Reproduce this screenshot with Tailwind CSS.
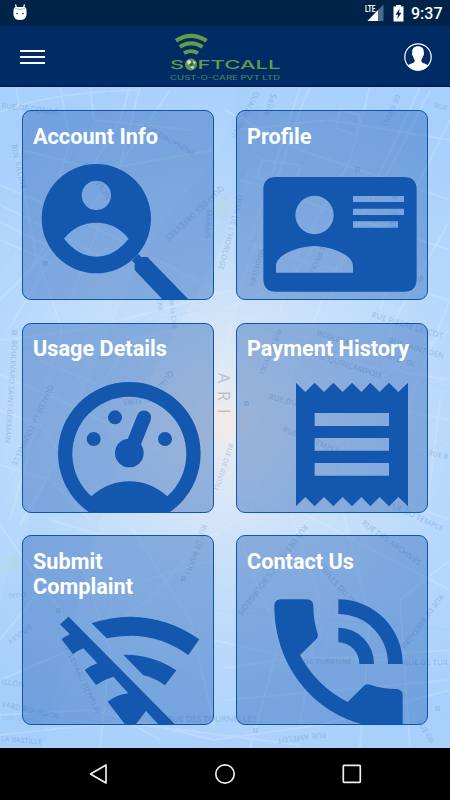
<!DOCTYPE html>
<html lang="en">
<head>
<meta charset="utf-8">
<meta name="viewport" content="width=device-width, initial-scale=1">
<title>Softcall</title>
<script src="https://cdn.jsdelivr.net/npm/@tailwindcss/browser@4"></script>
</head>
<body class="w-[450px] h-[800px] overflow-hidden flex flex-col bg-black font-['Roboto',sans-serif]">

<!-- Status bar -->
<div class="h-[26px] shrink-0 bg-[#002349] flex items-center justify-between pl-[13px] pr-[9px] text-white">
    <svg class="w-[14px] h-[18px]" viewBox="0 1 14 18">
        <path d="M2.5 1.5 3.5 5M11.500 1.500 10.500 5" stroke="#fff" stroke-width="1.200"/>
        <path d="M.5 7.500Q.5 4 3 4H11Q13.500 4 13.500 7.500V12Q13 17 7 17T.5 12Z" fill="#fff"/>
        <path d="M2 5.500Q7 7.500 12 5.500" fill="none" stroke="#a9bbd0" stroke-width="1"/>
        <circle cx="4" cy="10.500" r=".8" fill="#002349"/><circle cx="10" cy="10.500" r=".8" fill="#002349"/>
    </svg>
    <div class="flex items-center">
        <svg class="w-[20px] h-[18px] mr-[8px]" viewBox="0 1 20 18">
            <path d="M18.500 1.500V18H2.500Z" fill="#4b6b92"/>
            <path d="M13 7V18H2.500Z" fill="#fff"/>
            <path d="M-1 0H11V9H-1Z" fill="#002349"/>
            <text x="0" y="9" font-family="Roboto" font-weight="700" font-size="9.500" textLength="10.500" lengthAdjust="spacingAndGlyphs" fill="#fff">LTE</text>
        </svg>
        <svg class="w-[11px] h-[17px] mr-[7px]" viewBox="0 0 11 17">
            <path d="M3 0H8V1.500H10.500V16.500H.5V1.500H3Z" fill="#fff"/>
            <path d="M6.700 3.500 2.500 9.800H5L4.200 14 8.500 7.800H6Z" fill="#002349"/>
        </svg>
        <span class="w-[30px] text-[16px] leading-[26px] font-medium relative top-[1px]">9:37</span>
    </div>
</div>

<!-- App bar -->
<header class="h-[61px] shrink-0 bg-[#002c65] border-b border-[#001443] flex items-center justify-between pl-[20px] pr-[18px]">
    <div class="flex flex-col gap-[4px] w-[27px] pt-[2px]">
        <span class="h-[2px] w-[25px] bg-white"></span>
        <span class="h-[2px] w-[25px] bg-white"></span>
        <span class="h-[2px] w-[25px] bg-white"></span>
    </div>
    <svg class="w-[112px] h-[50px]" viewBox="170 31 112 50" fill="none">
        <g stroke="#669b48">
            <path d="M176 40.700Q191 31 206.500 40.700" stroke-width="4.200"/>
            <path d="M179.800 46.900Q191 39.500 202.500 46.900" stroke-width="3.900"/>
            <path d="M184 53.200Q191 49 198 53.200" stroke-width="3.700"/>
        </g>
        <g fill="#669b48" font-family="Inter, sans-serif" font-weight="500">
            <text x="170" y="69" font-size="12" textLength="14" lengthAdjust="spacingAndGlyphs">S</text>
            <text x="197.500" y="69" font-size="12" textLength="83" lengthAdjust="spacingAndGlyphs">FTCALL</text>
            <text x="170" y="80" font-size="6" textLength="110" lengthAdjust="spacingAndGlyphs" fill="#48805a">CUST-O-CARE PVT LTD</text>
        </g>
        <circle cx="191" cy="64.500" r="6" fill="#5f9352"/>
        <path d="M187 61 190 60 191 63 188 65ZM193 60.500 196 63 194 64ZM190 67 194 66 193 69Z" fill="#dbe8cc"/>
        <path d="M189 64 193 63 192 66Z" fill="#24573b"/>
    </svg>
    <svg class="w-[28px] h-[28px] relative top-[1px]" viewBox="0 0 28 28">
        <circle cx="14" cy="14" r="13.200" fill="none" stroke="#fff" stroke-width="1.200"/>
        <path d="M14 3.300C18.300 3.300 20 6 19.800 9.500 20.200 10.500 20 12.300 19 13 18.600 15.200 17.700 16.500 17.300 17.300 17.300 19.300 18 19.800 20.500 20.600 22.300 21.200 23.700 22 24 22.800A13.200 13.200 0 0 1 4 22.800C4.300 22 5.700 21.200 7.500 20.600 10 19.800 10.700 19.300 10.700 17.300 10.300 16.500 9.400 15.200 9 13 8 12.300 7.800 10.500 8.200 9.500 8 6 9.700 3.300 14 3.300Z" fill="#fff"/>
    </svg>
</header>

<!-- Menu over the street map -->
<main class="relative h-[661px] shrink-0 overflow-hidden bg-[#a9d1fc]">
    <svg class="absolute inset-0 w-full h-full" viewBox="0 87 450 661">
        <defs>
            <radialGradient id="glow" gradientUnits="userSpaceOnUse" cx="225" cy="422" r="350">
                <stop offset="0" stop-color="#f3ebe6"/>
                <stop offset=".1" stop-color="#e4eaf3"/>
                <stop offset=".35" stop-color="#cce2f9"/>
                <stop offset=".65" stop-color="#b9d9fc"/>
                <stop offset="1" stop-color="#a7d0fc"/>
            </radialGradient>
        </defs>
        <path d="M0 87H450V748H0Z" fill="url(#glow)"/>
        <!-- river -->
        <path d="M240 87Q225 160 190 190T110 330 20 540L0 600V748H40L90 560Q120 430 165 350T215 260Q250 180 262 87Z" fill="#8fc0f4" opacity=".1"/>
        <path d="M214 210 225 190 232 205 222 225ZM0 560 30 545 20 565 0 575Z" fill="#b4dcd0" opacity=".3"/>
        <!-- streets -->
        <g fill="none" stroke="#e4f1ff" stroke-opacity=".25" stroke-width="2">
            <path d="M0 112Q50 92 140 90M16 87 24 130 18 160 35 250 62 330 10 520M0 185 70 215 140 250 214 290M0 205 60 235 130 272M0 222 80 262M0 240 50 262 8 330M30 270 120 120 130 87M0 300 90 210 170 90M22 150 100 170 214 150M60 87 70 140 50 210M140 87 115 185 70 300M90 87 94 120 190 130"/>
            <path d="M0 340 80 330 160 310 230 290M0 375 60 400 140 440 214 480M0 410 40 425 100 510M20 525 75 430 130 340 214 322M0 465 50 480 90 520M40 360 110 390 190 420M120 512 160 440 214 330M50 520 100 535 220 535M0 640 40 590 110 590 214 560M0 525 60 610 90 700 160 740M0 680 70 650 150 600 214 525"/>
            <path d="M0 715 90 710 214 740 320 725 450 690M0 735 120 722 300 745M100 748 110 650 80 560M130 525 190 620 214 725M214 640 300 660 450 650M225 668 300 657 450 662M225 700 450 680M250 748 280 640 240 540M300 725 320 600 290 510M360 748 370 620 340 500M410 748 400 600 450 560"/>
            <path d="M214 535 270 500 320 420 450 330M236 440 320 470 450 520M225 490 300 512 450 590M236 380 300 390 450 420M240 340 330 360 450 380M214 400 240 290 300 110 310 87M250 512 280 400 340 260 420 87M330 512 360 400 400 310 450 220M390 512 410 400 450 300M428 500 440 400"/>
            <path d="M225 110 300 150 420 190 450 200M240 180 330 210 450 250M236 240 300 260 450 300M300 87 280 150 250 240M370 87 350 160 300 250 280 310M430 90 400 150 350 240 330 300M450 120 420 180 380 310M236 130 330 120 450 140M225 310 290 280 340 210M262 160 300 165 295 185 258 178ZM340 110 360 115 355 135 336 128Z"/>
        </g>
        <g fill="none" stroke="#7fb0e8" stroke-opacity=".1" stroke-width="1">
            <path d="M0 190 120 242 214 280M0 270 60 180 110 87M20 350 200 310M0 500 90 350 160 310M225 200 300 87M236 270 340 100M240 320 450 390M236 450 380 310M300 512 450 440M40 748 110 600 214 540M214 610 450 630M300 700 360 535M225 590 450 720"/>
        </g>
        <!-- street names -->
        <g fill="#5a83b5" fill-opacity=".3" font-family="'Open Sans', sans-serif" font-size="7.900" font-weight="600">
            <text transform="translate(1 108) rotate(7)">RUE DE CONDÉ</text>
            <text transform="translate(142 128) rotate(29)">RUE DAUPHINE</text>
            <text transform="translate(11 145) rotate(77)">RUE RACINE</text>
            <text transform="translate(82 165) rotate(55)">R. DANTON</text>
            <text transform="translate(221 185) rotate(137)">QUAI DES ORFÈVRES</text>
            <text transform="translate(206 209) rotate(92)">MARAIS</text>
            <text transform="translate(157 298) rotate(84)" font-size="7">Cité</text>
            <text transform="translate(169 298) rotate(84)" font-size="7">de la Cité</text>
            <text transform="translate(255 91) rotate(118)" font-size="7">QUAI DE CONTI</text>
            <text transform="translate(271 93) rotate(108)" font-size="9">Seine</text>
            <text transform="translate(396 94) rotate(113)" font-size="7">DE RIVOLI</text>
            <text transform="translate(434 108) rotate(10)" font-size="7">RUE</text>
            <text transform="translate(238 194) rotate(105)">QUAI DE L'HORLOGE</text>
            <text transform="translate(260 248) rotate(107)" font-size="7">MÉGISSERIE</text>
            <text transform="translate(321 246) rotate(115)" font-size="7">E RIVOLI</text>
            <text transform="translate(392 195) rotate(92)" font-size="7">R. BERGER</text>
            <text transform="translate(12 340) rotate(94)" font-size="7.400">BOULEVARD SAINT-GERMAIN</text>
            <text transform="translate(49 384) rotate(115)" font-size="7.700">QUAI DE LA TOURNELLE</text>
            <text transform="translate(150 396) rotate(172)">FLEURS</text>
            <text transform="translate(170 370) rotate(130)">QUAI</text>
            <text transform="translate(371 317) rotate(17)" font-size="7.900">RUE PIERRE LESCOT</text>
            <text transform="translate(316 335) rotate(18)" font-size="7.400">BOULEVARD DE SÉBASTOPOL</text>
            <text transform="translate(388 343) rotate(16)" font-size="7.700">RUE SAINT-DEN</text>
            <text transform="translate(311 356) rotate(18)">RUE QUINCAMPOIX</text>
            <text transform="translate(268 399) rotate(14)">RUE DU RENARD</text>
            <text transform="translate(282 431) rotate(22)">RUE DU TEMPLE</text>
            <text transform="translate(278 328) rotate(113)" font-size="7">RUE DE RIVOLI</text>
            <text transform="translate(229 443) rotate(108)" font-size="7">RUE DE RIVOLI</text>
            <text transform="translate(428 455) rotate(12)" font-size="7">RUE B</text>
            <text transform="translate(387 506) rotate(25)">RUE DU TEMPLE</text>
            <text transform="translate(361 524) rotate(36)" font-size="7.900">RUE DES ARCHIVES</text>
            <text transform="translate(304 524) rotate(127)">RUE DES FRANCS BOURGEOIS</text>
            <text transform="translate(318 566) rotate(49)">VIEILLE DU TEMPLE</text>
            <text transform="translate(440 594) rotate(127)" font-size="7.500">RUE DE BRETAGNE</text>
            <text transform="translate(303 664)">DE TURENNE</text>
            <text transform="translate(403 665)">RUE DE TUR</text>
            <text transform="translate(167 722)" font-size="8.500">RUE DES TOURNELLES</text>
            <text transform="translate(326 732) rotate(173)">RUE AMELOT</text>
            <text transform="translate(417 722) rotate(58)" font-size="7">RUE OB</text>
            <text transform="translate(202 524) rotate(108)" font-size="7.500">RUE DE RIVOLI</text>
            <text transform="translate(26 592) rotate(175)" font-size="7">QUAI</text>
            <text transform="translate(29 624) rotate(142)" font-size="7">BOULEV</text>
            <text transform="translate(61 640) rotate(65)">BOULEVARD HENRI IV</text>
            <text transform="translate(1 684) rotate(9)">ILLON</text>
            <text transform="translate(1 706) rotate(13)" font-size="7.400">VARD BOURDON</text>
            <text transform="translate(1 719) rotate(8)" fill="#79b4ef">ent-Martin</text>
            <text transform="translate(1 741) rotate(5)" font-size="7">LA BASTILLE</text>
        </g>
        <g fill="#9aa3b3" fill-opacity=".6" font-family="'Open Sans', sans-serif" font-size="16">
            <text transform="translate(218 373) rotate(90)" letter-spacing="8">ARI</text>
        </g>
        <g fill="#6f97c9" fill-opacity=".2" stroke="#6f97c9" stroke-opacity=".2">
            <path d="M43.500 261.500h4v4h-4zM355.500 167.500h4v4h-4zM418.500 276.500h4v4h-4zM12.500 330.500h4v4h-4zM244.500 401.500h4v4h-4zM56.500 608.500h4v4h-4zM181.500 576.500h4v4h-4zM253.500 728.500h4v4h-4zM435.500 706.500h4v4h-4z"/>
        </g>
    </svg>

    <div class="relative grid grid-cols-[192px_192px] auto-rows-[190px] gap-x-[22px] gap-y-[22.500px] px-[22px] pt-[23px] text-white text-[21.700px] leading-[25.500px] font-bold">
        <section class="relative overflow-hidden rounded-[9px] border border-[#0f55b0] bg-[#1a58b0]/38 px-[10px] pt-[12.500px]">
            <svg class="absolute -top-px -left-px w-[192px] h-[190px]" viewBox="66 60 576 570" fill="#1457af">
                <path fill-rule="evenodd" d="M125 386a164 164 0 1 1 328 0a164 164 0 1 1-328 0ZM245 316a44 44 0 1 0 88 0a44 44 0 1 0-88 0ZM192 446Q230 398 289 398T386 446Q344 500 289 500T192 446Z"/>
                <path d="M396 512 415 492 424 501H442L574 637H496L404 540V520Z"/>
            </svg>
            <h2 class="relative">Account Info</h2>
        </section>

        <section class="relative overflow-hidden rounded-[9px] border border-[#0f55b0] bg-[#1a58b0]/38 px-[10px] pt-[12.500px]">
            <svg class="absolute -top-px -left-px w-[192px] h-[190px]" viewBox="33 60 576 570" fill="#1457af">
                <path fill-rule="evenodd" d="M153 261H537Q575 261 575 299V566Q575 605 537 605H153Q115 605 115 566V299Q115 261 153 261ZM211 375a57.500 57.500 0 1 0 115 0a57.500 57.500 0 1 0-115 0ZM153 548V528C153 490 230 468 268 468S384 490 384 528V548ZM384 318H537V336H384ZM384 356H537V375H384ZM384 394H519V413H384Z"/>
            </svg>
            <h2 class="relative">Profile</h2>
        </section>

        <section class="relative overflow-hidden rounded-[9px] border border-[#0f55b0] bg-[#1a58b0]/38 px-[10px] pt-[12.500px]">
            <svg class="absolute -top-px -left-px w-[192px] h-[190px]" viewBox="66 53 576 570" fill="#1457af">
                <path fill-rule="evenodd" d="M174 444a214 214 0 1 1 428 0a214 214 0 1 1-428 0ZM274 573Q325 528 388 528T502 573A171 171 0 1 0 274 573Z"/>
                <circle cx="281" cy="401" r="21"/>
                <circle cx="345" cy="336" r="21"/>
                <circle cx="495" cy="401" r="21"/>
                <circle cx="388" cy="443" r="43"/>
                <path d="M402 412 432 337" stroke="#1457af" stroke-width="43" stroke-linecap="round"/>
            </svg>
            <h2 class="relative">Usage Details</h2>
        </section>

        <section class="relative overflow-hidden rounded-[9px] border border-[#0f55b0] bg-[#1a58b0]/38 px-[10px] pt-[12.500px]">
            <svg class="absolute -top-px -left-px w-[192px] h-[190px]" viewBox="33 53 576 570" fill="#1457af">
                <path fill-rule="evenodd" d="M213 232 241 260 269 232 297 260 325 232 353 260 381 232 409 260 436 232 464 260 492 232 520 260 549 232V603L520 575 492 603 464 575 436 603 409 575 381 603 353 575 325 603 297 575 269 603 241 575 213 603ZM269 323V362H492V323ZM269 398V436H492V398ZM269 473V511H492V473Z"/>
            </svg>
            <h2 class="relative">Payment History</h2>
        </section>

        <section class="relative overflow-hidden rounded-[9px] border border-[#0f55b0] bg-[#1a58b0]/38 px-[10px] pt-[12.500px]">
            <svg class="absolute -top-px -left-px w-[192px] h-[190px]" viewBox="66 45 576 570" fill="#1457af">
                <path d="M206 290L528 616H478L438 573L405 616H377L323 545Q350 524 385 520L340 470Q312 478 288 495L254 450Q271 437 292 430L250 385Q234 391 219 403L185 358Q196 349 209 343L180 313Z"/>
                <path d="M275 310Q332 290 392 290Q505 292 598 358L565 405Q484 347 392 347Q355 347 320 355Z"/>
                <path d="M370 404Q456 402 529 451L495 496Q465 474 429 465Z"/>
            </svg>
            <h2 class="relative">Submit<br>Complaint</h2>
        </section>

        <section class="relative overflow-hidden rounded-[9px] border border-[#0f55b0] bg-[#1a58b0]/38 px-[10px] pt-[12.500px]">
            <svg class="absolute -top-px -left-px w-[192px] h-[190px]" viewBox="33 45 576 570" fill="#1457af">
                <path d="M168 238H244Q265 238 265 258Q265 302 278 341Q281 350 272 359L225 405Q275 499 368 546L414 500Q423 490 436 494Q475 507 513 507Q533 507 533 527V616H425C265 580 148 436 148 258Q148 238 168 238Z"/>
                <path d="M340 238A193 193 0 0 1 533 432H489A149 149 0 0 0 340 282Z"/>
                <path d="M340 323A108 108 0 0 1 447 432H403A64 64 0 0 0 340 367Z"/>
            </svg>
            <h2 class="relative">Contact Us</h2>
        </section>
    </div>
</main>

<!-- System navigation -->
<nav class="h-[52px] shrink-0 bg-black flex items-center justify-between pl-[88px] pr-[87px]">
    <svg class="w-[20px] h-[22px]" viewBox="0 0 20 22"><path d="M18 2V20L2.500 11Z" fill="none" stroke="#eee" stroke-width="1.700" stroke-linejoin="round"/></svg>
    <svg class="w-[22px] h-[22px]" viewBox="0 0 22 22"><circle cx="11" cy="11" r="9.200" fill="none" stroke="#eee" stroke-width="1.700"/></svg>
    <svg class="w-[22px] h-[22px]" viewBox="0 0 22 22"><rect x="2.300" y="2.300" width="17" height="17" rx=".7" fill="none" stroke="#eee" stroke-width="1.700"/></svg>
</nav>

</body>
</html>
